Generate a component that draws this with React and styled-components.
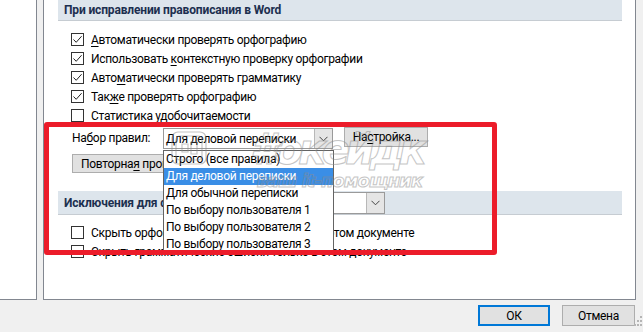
import React from "react"
import styled, { createGlobalStyle } from "styled-components"

const GlobalStyle = createGlobalStyle`
  html, body {
    margin: 0;
    padding: 0;
    background: #f0f0f0;
  }
  body {
    font-family: Roboto, "Noto Sans", sans-serif;
    font-size: 12px;
    letter-spacing: -0.3px;
    color: #000;
  }
`

const Window = styled.div`
  position: relative;
  width: 643px;
  height: 332px;
  overflow: hidden;
  display: flex;
  flex-direction: column;
  background: #f0f0f0;
`

const Body = styled.div`
  display: flex;
  height: 300px;
`

const NavPane = styled.div`
  width: 36px;
  background: #fff;
  border-right: 1px solid #828790;
  border-bottom: 1px solid #828790;
`

const Content = styled.div`
  flex: 1;
  margin: 0 7px 0 6px;
  background: #fff;
  border: 1px solid #828790;
  border-top: none;
  padding: 0 13px 0 14px;
  display: flex;
  flex-direction: column;
`

const SectionHeader = styled.div`
  display: flex;
  align-items: center;
  height: ${p => p.$h}px;
  padding-left: 6px;
  background: #dde5ec;
  border-bottom: 1px solid #c6ccd2;
  font-weight: 700;
  letter-spacing: -0.15px;
  color: #1c2f4f;
  margin-top: ${p => p.$mt || 0}px;
`

const HeaderLabel = styled.span`
  width: ${p => p.$w}px;
  white-space: nowrap;
`

const Options = styled.div`
  display: flex;
  flex-direction: column;
  padding-left: 13px;
  margin-top: ${p => p.$mt}px;
`

const OptionRow = styled.label`
  display: flex;
  align-items: center;
  gap: 7px;
  height: 19px;
  white-space: nowrap;
`

const Box = styled.span`
  width: 13px;
  height: 13px;
  box-sizing: border-box;
  border: 1px solid #333;
  background: #fff;
  display: flex;
  align-items: center;
  justify-content: center;
  flex-shrink: 0;
`

const U = styled.span`
  text-decoration: underline;
  text-underline-offset: 2px;
`

const RuleRow = styled.div`
  display: flex;
  align-items: flex-start;
  margin: 2px 0 0 14px;
  height: 22px;
`

const RuleLabel = styled.span`
  width: 91px;
  line-height: 22px;
`

const Select = styled.div`
  display: flex;
  box-sizing: border-box;
  width: ${p => p.$w}px;
  height: ${p => p.$h}px;
  margin-top: ${p => p.$mt || 0}px;
  border: 1px solid #9a9a9a;
  background: #fff;
  font-weight: 400;
  letter-spacing: -0.3px;
  color: #000;
  flex-shrink: 0;
`

const SelectText = styled.span`
  flex: 1;
  padding-left: 2px;
  display: flex;
  align-items: center;
  white-space: nowrap;
  overflow: hidden;
`

const SelectArrow = styled.span`
  width: 17px;
  background: #e5e5e5;
  border-left: 1px solid #b8b8b8;
  display: flex;
  align-items: center;
  justify-content: center;
`

const Button = styled.button`
  box-sizing: border-box;
  font: inherit;
  letter-spacing: inherit;
  color: #000;
  width: ${p => p.$w}px;
  height: ${p => p.$h}px;
  padding: 0;
  background: #e1e1e1;
  border: ${p => (p.$default ? "2px solid #0078d7" : "1px solid #adadad")};
  white-space: nowrap;
  overflow: hidden;
  flex-shrink: 0;
`

const RecheckButton = styled(Button)`
  margin: 5px 0 0 14px;
  text-align: left;
  padding-left: 8px;
`

const SideButton = styled(Button)`
  margin-left: 11px;
`

const Footer = styled.div`
  flex: 1;
  display: flex;
  justify-content: flex-end;
  align-items: flex-start;
  gap: 12px;
  padding: 5px 8px 0 0;
`

const Dropdown = styled.ul`
  position: absolute;
  left: 163px;
  top: 150px;
  width: 169px;
  height: 102px;
  margin: 0;
  padding: 0;
  list-style: none;
  background: #fff;
  border: 1px solid #646464;
  overflow: hidden;
`

const DropItem = styled.li`
  height: 17px;
  line-height: 17px;
  padding-left: 2px;
  white-space: nowrap;
  background: ${p => (p.$active ? "#3a8ee6" : "transparent")};
  color: ${p => (p.$active ? "#fff" : "#000")};
`

const Highlight = styled.div`
  position: absolute;
  left: 44px;
  top: 122px;
  width: 453px;
  height: 133px;
  box-sizing: border-box;
  border: 5px solid #ec1c2a;
  border-radius: 3px;
  pointer-events: none;
`

const Watermark = styled.div`
  position: absolute;
  left: 170px;
  top: 128px;
  pointer-events: none;
  opacity: 0.5;
  display: flex;
  align-items: flex-start;
  gap: 40px;
`

const MarkText = styled.div`
  display: flex;
  flex-direction: column;
  align-items: flex-end;
  color: transparent;
  -webkit-text-stroke: 1px #8c8c8c;
  font-family: "DejaVu Sans", sans-serif;
  font-style: italic;
  font-weight: 700;
  white-space: nowrap;
`

const MarkTitle = styled.span`
  font-size: 42px;
  line-height: 44px;
  letter-spacing: -5px;
`

const MarkSub = styled.span`
  font-size: 18px;
  line-height: 18px;
  letter-spacing: -1px;
  margin-top: 0;
`

const Grip = styled.svg`
  position: absolute;
  right: 1px;
  bottom: 4px;
`

const Check = () => (
  <svg width="11" height="11" viewBox="0 0 11 11">
    <polyline points="1.5,5.5 4.2,8.3 9.6,2.2" fill="none" stroke="#222" strokeWidth="1" />
  </svg>
)

const Chevron = () => (
  <svg width="9" height="6" viewBox="0 0 9 6">
    <polyline points="0.5,0.8 4.5,4.8 8.5,0.8" fill="none" stroke="#444" strokeWidth="1" />
  </svg>
)

const MarkLogo = () => (
  <svg width="40" height="40" viewBox="0 0 40 40" fill="none" stroke="#8c8c8c" strokeWidth="1.2">
    <rect x="2" y="4" width="34" height="32" rx="6" />
    <rect x="6" y="8" width="26" height="24" rx="4" />
    <path d="M12 16 h6 v8 h-6 z M21 14 h6 v12 h-6 z" />
  </svg>
)

const Option = ({ checked, children }) => (
  <OptionRow>
    <Box>{checked && <Check />}</Box>
    <span>{children}</span>
  </OptionRow>
)

const rules = [
  "Строго (все правила)",
  "Для деловой переписки",
  "Для обычной переписки",
  "По выбору пользователя 1",
  "По выбору пользователя 2",
  "По выбору пользователя 3",
]

export default function App() {
  return (
    <>
      <GlobalStyle />
      <Window>
        <Body>
          <NavPane />
          <Content>
            <SectionHeader $h={20}>При исправлении правописания в Word</SectionHeader>
            <Options $mt={9}>
              <Option checked><U>А</U>втоматически проверять орфографию</Option>
              <Option checked>Использовать <U>к</U>онтекстную проверку орфографии</Option>
              <Option checked>Авто<U>м</U>атически проверять грамматику</Option>
              <Option checked>Так<U>ж</U>е проверять орфографию</Option>
              <Option>Статистика удобо<U>ч</U>итаемости</Option>
            </Options>
            <RuleRow>
              <RuleLabel>На<U>б</U>ор правил:</RuleLabel>
              <Select $w={170} $h={21} $mt={1}>
                <SelectText>Для деловой переписки</SelectText>
                <SelectArrow><Chevron /></SelectArrow>
              </Select>
              <SideButton $w={84} $h={20}>На<U>с</U>тройка...</SideButton>
            </RuleRow>
            <RecheckButton $w={190} $h={19}>Повторна<U>я</U> проверка документа</RecheckButton>
            <SectionHeader $h={23} $mt={18}>
              <HeaderLabel $w={141}>Исключения для файла:</HeaderLabel>
              <Select $w={180} $h={22}>
                <SelectText>Документ1</SelectText>
                <SelectArrow><Chevron /></SelectArrow>
              </Select>
            </SectionHeader>
            <Options $mt={8}>
              <Option>Скрыть орфографические ошибки только в этом документе</Option>
              <Option>Скрыть грамматические ошибки только в этом документе</Option>
            </Options>
          </Content>
        </Body>
        <Footer>
          <Button $default $w={72} $h={21}>ОК</Button>
          <Button $w={73} $h={21}>Отмена</Button>
        </Footer>
        <Dropdown>
          {rules.map((r, i) => (
            <DropItem key={r} $active={i === 1}>{r}</DropItem>
          ))}
        </Dropdown>
        <Watermark>
          <MarkLogo />
          <MarkText>
            <MarkTitle>#окейдк</MarkTitle>
            <MarkSub>ваш it-помощник</MarkSub>
          </MarkText>
        </Watermark>
        <Highlight />
        <Grip width="8" height="12" viewBox="0 0 8 12">
          <g fill="#b5b5b5">
            <rect x="6" y="0" width="2" height="2" />
            <rect x="6" y="4" width="2" height="2" />
            <rect x="3" y="4" width="2" height="2" />
            <rect x="6" y="8" width="2" height="2" />
            <rect x="3" y="8" width="2" height="2" />
            <rect x="0" y="8" width="2" height="2" />
          </g>
        </Grip>
      </Window>
    </>
  )
}
